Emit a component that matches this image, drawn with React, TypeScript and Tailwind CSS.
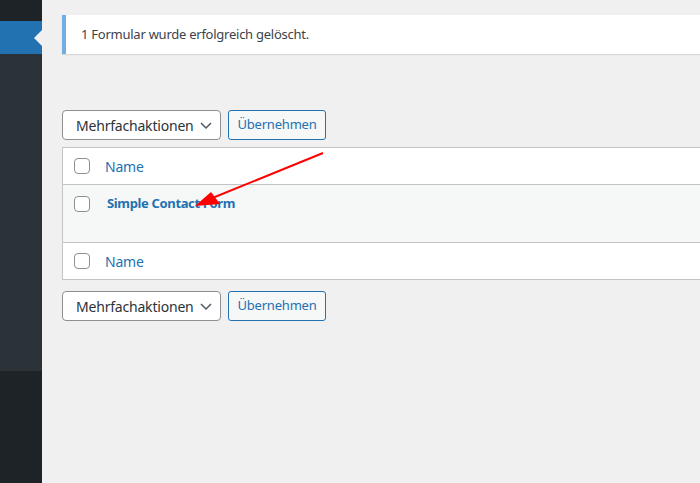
import React from "react";

const font = { fontFamily: '"Noto Sans", "Open Sans", sans-serif' };

function Checkbox() {
  return <span className="block h-4 w-4 shrink-0 rounded-[4px] border border-[#8c8f94] bg-white" />;
}

function BulkActions() {
  return (
    <div className="flex h-[30px] gap-[7px]">
      <div className="flex h-[30px] w-[159px] items-center justify-between rounded-[4px] border border-[#8c8f94] bg-white pl-[13px] pr-[7px] text-[14px] tracking-[-0.2px] text-[#2c3338]">
        <span>Mehrfachaktionen</span>
        <svg width="14" height="14" viewBox="0 0 14 14" fill="none">
          <path d="M2 5 L7 10 L12 5" stroke="#50575e" strokeWidth="1.5" />
        </svg>
      </div>
      <div className="flex h-[30px] w-[98px] items-center justify-center rounded-[3px] border border-[#2271b1] bg-[#f6f7f7] text-[13px] tracking-[-0.2px] text-[#2271b1]">
        Übernehmen
      </div>
    </div>
  );
}

export default function App() {
  return (
    <div className="flex h-[483px] w-[700px] overflow-hidden bg-[#f0f0f1]" style={font}>
      {/* admin menu */}
      <div className="flex w-[42px] shrink-0 flex-col">
        <div className="h-[21px] bg-[#1d2327]" />
        <div className="relative h-[33px] bg-[#2271b1]">
          <span className="absolute right-0 top-[9px] h-0 w-0 border-y-[8px] border-r-[8px] border-y-transparent border-r-[#f0f0f1]" />
        </div>
        <div className="h-[317px] bg-[#2c3338]" />
        <div className="flex-1 bg-[#1d2327]" />
      </div>

      {/* page body */}
      <div className="relative flex-1 overflow-hidden pl-5 pt-[15px]">
        <div className="w-[700px]">
          <div className="flex h-[39px] items-center border-l-4 border-[#72aee6] bg-white pl-[15px] text-[13px] tracking-[-0.25px] text-[#3c434a] shadow-[0_1px_1px_rgba(0,0,0,0.1)]">
            1 Formular wurde erfolgreich gelöscht.
          </div>

          <div className="mt-[56px]">
            <BulkActions />
          </div>

          <div className="mt-[7px] border border-[#c3c4c7] bg-white">
            <div className="flex h-[37px] items-center gap-[15px] border-b border-[#c3c4c7] pl-[11px] text-[14px] tracking-[-0.2px] text-[#2271b1]">
              <Checkbox />
              <span>Name</span>
            </div>
            <div className="flex h-[57px] items-start gap-[17px] bg-[#f6f7f7] pl-[11px] pt-[11px]">
              <Checkbox />
              <span className="-mt-[2px] text-[13px] font-bold tracking-[-0.35px] text-[#2271b1]">Simple Contact Form</span>
            </div>
            <div className="flex h-[37px] items-center gap-[15px] border-t border-[#c3c4c7] pl-[11px] text-[14px] tracking-[-0.2px] text-[#2271b1]">
              <Checkbox />
              <span>Name</span>
            </div>
          </div>

          <div className="mt-[11px]">
            <BulkActions />
          </div>
        </div>

        {/* annotation arrow */}
        <svg className="pointer-events-none absolute left-0 top-0" width="658" height="483" viewBox="42 0 658 483">
          <line x1="323" y1="153" x2="205" y2="201" stroke="#ff0000" strokeWidth="2" />
          <polygon points="195,206 211,192 220,204" fill="#ff0000" />
        </svg>
      </div>
    </div>
  );
}
